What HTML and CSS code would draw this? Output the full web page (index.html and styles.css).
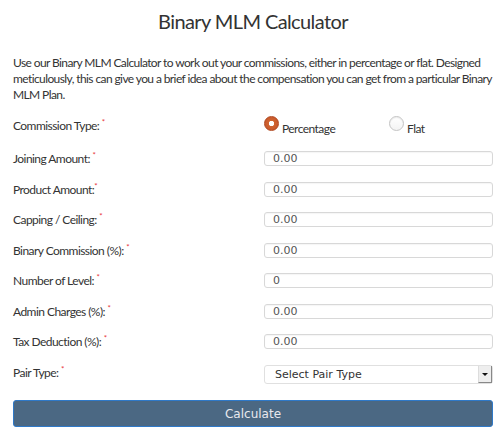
FILE: index.html
```html
<!DOCTYPE html>
<html>
  <head>
    <title>Binary MLM Calculator</title>
    <link rel="stylesheet" href="styles.css">
  </head>
  <body>
    <div class="calc">
      <h2 class="calc-title">Binary MLM Calculator</h2>
      <p class="calc-intro">Use our Binary MLM Calculator to work out your commissions, either in percentage or flat. Designed meticulously, this can give you a brief idea about the compensation you can get from a particular Binary MLM Plan.</p>

      <form class="calc-form" onsubmit="return false">
        <div class="row row-radio">
          <label class="row-label">Commission Type: <span class="req">*</span></label>
          <div class="radios">
            <label class="opt opt-first"><input type="radio" name="ctype" checked><span>Percentage</span></label>
            <label class="opt"><input type="radio" name="ctype"><span>Flat</span></label>
          </div>
        </div>
        <div class="row">
          <label class="row-label">Joining Amount: <span class="req">*</span></label>
          <input class="field" type="text" value="0.00">
        </div>
        <div class="row">
          <label class="row-label">Product Amount:<span class="req">*</span></label>
          <input class="field" type="text" value="0.00">
        </div>
        <div class="row">
          <label class="row-label">Capping / Ceiling: <span class="req">*</span></label>
          <input class="field" type="text" value="0.00">
        </div>
        <div class="row">
          <label class="row-label">Binary Commission (%): <span class="req">*</span></label>
          <input class="field" type="text" value="0.00">
        </div>
        <div class="row">
          <label class="row-label">Number of Level: <span class="req">*</span></label>
          <input class="field" type="text" value="0">
        </div>
        <div class="row">
          <label class="row-label">Admin Charges (%): <span class="req">*</span></label>
          <input class="field" type="text" value="0.00">
        </div>
        <div class="row">
          <label class="row-label">Tax Deduction (%): <span class="req">*</span></label>
          <input class="field" type="text" value="0.00">
        </div>
        <div class="row">
          <label class="row-label">Pair Type: <span class="req">*</span></label>
          <div class="select-wrap">
            <select class="select">
              <option>Select Pair Type</option>
              <option>1:1</option>
              <option>1:2</option>
              <option>2:1</option>
            </select>
            <span class="select-arrow"></span>
          </div>
        </div>
        <button class="btn-calc" type="submit">Calculate</button>
      </form>
    </div>
  </body>
</html>
```

FILE: styles.css
```css
* {
  box-sizing: border-box;
  margin: 0;
}
body {
  background: #fff;
  font-family: Lato, "Liberation Sans", sans-serif;
  color: #333;
}
.calc {
  padding: 9px 10px 0 13px;
}
.calc-title {
  font-size: 20px;
  line-height: 24px;
  font-weight: 400;
  letter-spacing: -0.6px;
  text-align: center;
  color: #333;
  margin-bottom: 22px;
}
.calc-intro {
  font-size: 12px;
  line-height: 16px;
  letter-spacing: -0.6px;
  margin-bottom: 13px;
}
.row {
  display: grid;
  grid-template-columns: 251px 1fr;
  align-items: start;
  height: 30.5px;
}
.row-radio {
  height: 35px;
}
.row-label {
  font-size: 12px;
  line-height: 15px;
  letter-spacing: -0.55px;
}
.row-radio .row-label {
  padding-top: 2px;
}
.req {
  color: #e8343a;
  font-size: 8px;
  vertical-align: top;
  line-height: 9px;
}
.radios {
  display: flex;
}
.opt {
  display: flex;
  align-items: flex-start;
  font-size: 12px;
  line-height: 15px;
  letter-spacing: -0.55px;
}
.opt-first {
  width: 125px;
}
.opt span {
  padding-top: 5px;
  margin-left: 3px;
}
.opt input {
  appearance: none;
  width: 15px;
  height: 15px;
  margin: 0;
  border-radius: 50%;
  border: 1px solid #c4c4c4;
  background: linear-gradient(#fff, #f3f3f3);
  box-shadow: inset 0 1px 1px rgba(0, 0, 0, 0.08);
}
.opt input:checked {
  border-color: #b0471f;
  background: radial-gradient(circle, #fff 0, #fff 2.4px, #d0632f 3px, #c2532a 100%);
  box-shadow: none;
}
.field {
  display: block;
  width: 229px;
  height: 15px;
  border: 1px solid #d8d8d8;
  border-radius: 3px;
  padding: 0 0 0 8px;
  font-family: "DejaVu Sans", sans-serif;
  font-size: 11px;
  color: #555;
  box-shadow: inset 0 1px 1px rgba(0, 0, 0, 0.04);
}
.select-wrap {
  position: relative;
  width: 229px;
  height: 19px;
}
.select {
  display: block;
  appearance: none;
  width: 100%;
  height: 19px;
  border: 1px solid #e0e0e0;
  border-radius: 3px;
  background: #fff;
  padding: 0 0 0 10px;
  font-family: "DejaVu Sans", sans-serif;
  font-size: 11px;
  color: #333;
}
.select-arrow {
  position: absolute;
  right: 1px;
  top: 1px;
  width: 14px;
  height: 17px;
  background: #eee;
  border-right: 1px solid #888;
  border-bottom: 1px solid #888;
  border-left: 1px solid #ddd;
  pointer-events: none;
}
.select-arrow::after {
  content: "";
  position: absolute;
  left: 3px;
  top: 7px;
  border-left: 3px solid transparent;
  border-right: 3px solid transparent;
  border-top: 3px solid #111;
}
.btn-calc {
  display: block;
  width: 480px;
  height: 27px;
  margin-top: 5px;
  background: #4b6883;
  border: 1px solid #2f79c8;
  border-radius: 3px;
  color: #e8e8ee;
  font-family: "DejaVu Sans", sans-serif;
  font-size: 12px;
}
```
